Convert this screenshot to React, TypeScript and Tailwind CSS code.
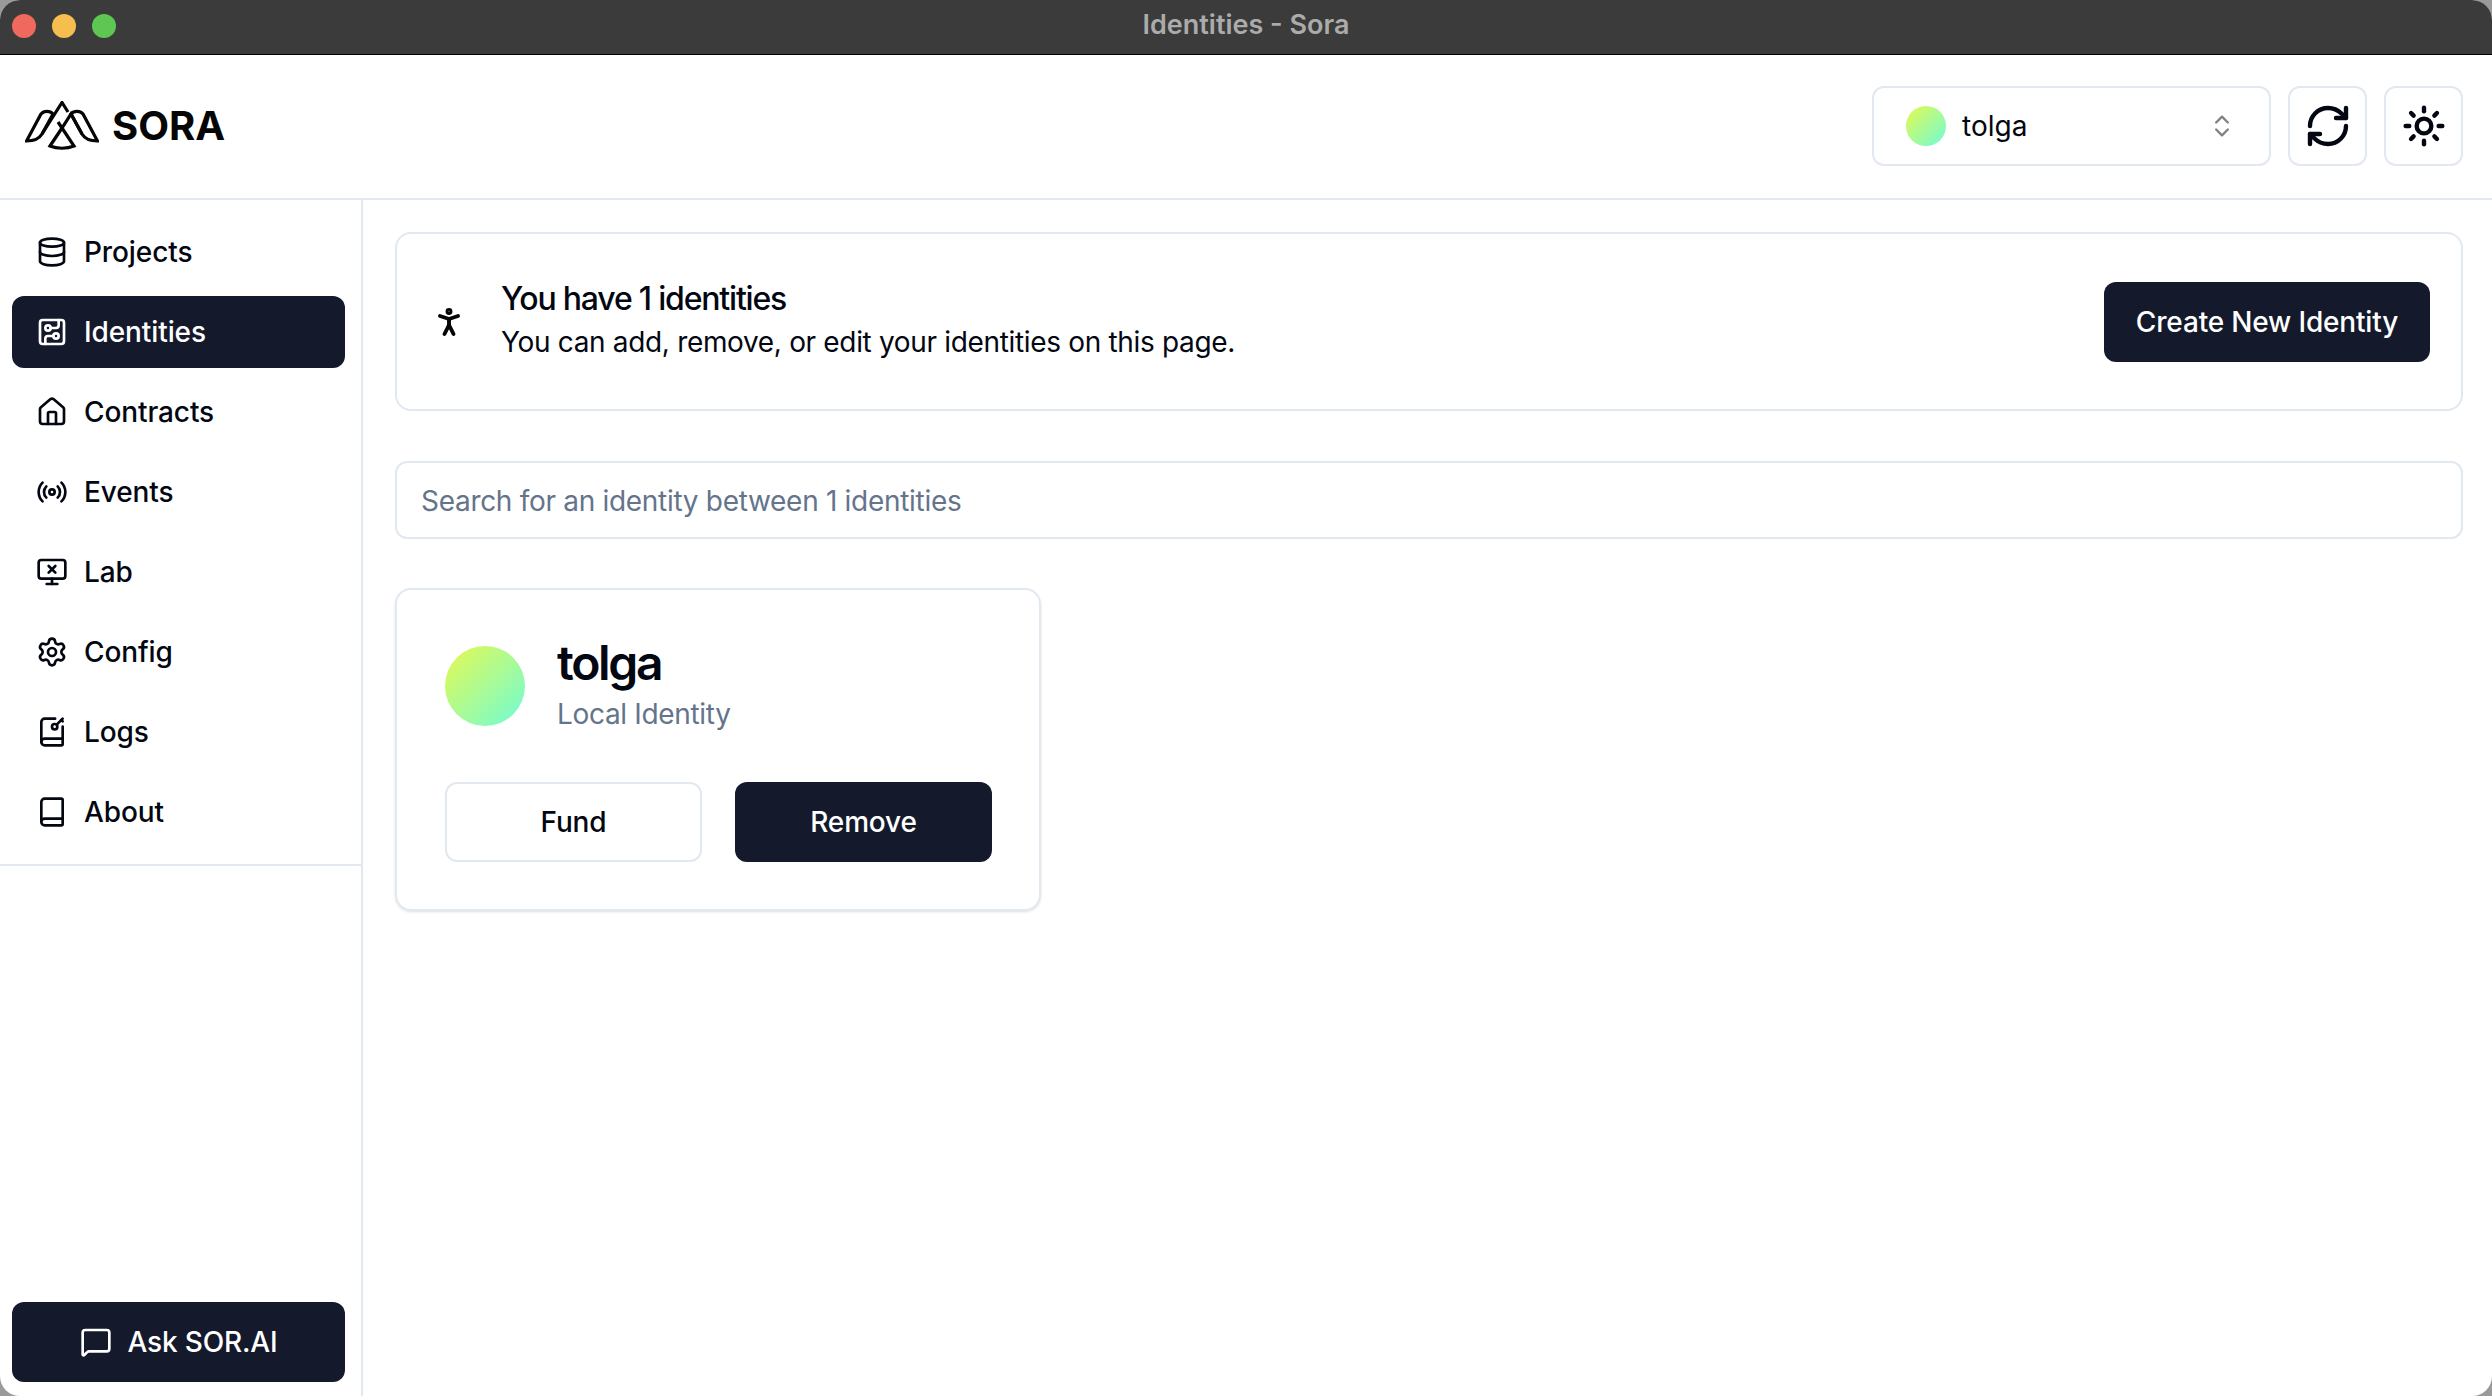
import { Database, CircuitBoard, House, Radio, MonitorX, Settings, BookKey, Book, MessageSquare, RefreshCw, Sun, ChevronsUpDown, PersonStanding } from "lucide-react";

const nav = [
  { label: "Projects", Icon: Database },
  { label: "Identities", Icon: CircuitBoard, active: true },
  { label: "Contracts", Icon: House },
  { label: "Events", Icon: Radio },
  { label: "Lab", Icon: MonitorX },
  { label: "Config", Icon: Settings },
  { label: "Logs", Icon: BookKey },
  { label: "About", Icon: Book },
];

function Logo() {
  return (
    <svg width="74" height="50" viewBox="0 0 74 50" fill="none" stroke="#050505" strokeWidth="3.2" strokeLinejoin="miter">
      <path d="M1.5 40 C8 40 14 38 17 33 L28 13 C25 9.5 19 9.5 16 13 Z" />
      <path d="M72.5 40 C66 40 60 38 57 33 L46 13 C49 9.5 55 9.5 58 13 Z" />
      <path d="M17 33 L37 1.5 L43 11" />
      <path d="M57 33 L46 13 L37 27 L33 21" />
      <path d="M25 45 L37 27 L49 45 C42 48 32 48 25 45 Z" />
    </svg>
  );
}

function Avatar({ cls }: { cls: string }) {
  return <div className={`rounded-full bg-linear-to-br/srgb from-[#e6f94f] to-[#6ffcd8] ${cls}`} />;
}

export default function App() {
  return (
    <div className="h-screen w-full bg-[#9a9a9a]">
      <div className="h-full w-full overflow-hidden rounded-[20px] flex flex-col bg-white text-[#030712] font-['Inter',sans-serif]">
        <div className="relative h-[55px] shrink-0 bg-[#3a3b3a] border-b border-black flex items-center justify-center">
          <div className="absolute left-[12px] top-[14px] flex gap-[16px]">
            <span className="size-[24px] rounded-full bg-[#f0695f]" />
            <span className="size-[24px] rounded-full bg-[#f6bd4f]" />
            <span className="size-[24px] rounded-full bg-[#60c653]" />
          </div>
          <span className="text-[27px] font-semibold text-[#ababab] pb-[4px]">Identities - Sora</span>
        </div>

        <header className="h-[145px] shrink-0 border-b-2 border-[#e2e8f0] flex items-center justify-between pl-[25px] pr-[29px] pb-[1px]">
          <div className="flex items-center gap-[13px]">
            <Logo />
            <span className="text-[40px] font-bold leading-none text-[#050505]">SORA</span>
          </div>
          <div className="flex items-center gap-[17px]">
            <div className="w-[399px] h-[80px] rounded-[12px] border-2 border-[#e2e8f0] flex items-center pl-[32px] pr-[33px]">
              <Avatar cls="size-[40px] mr-[16px]" />
              <span className="text-[28px] flex-1">tolga</span>
              <ChevronsUpDown size={28} strokeWidth={2} className="opacity-50" />
            </div>
            <button className="w-[79px] h-[80px] rounded-[12px] border-2 border-[#e2e8f0] flex items-center justify-center">
              <RefreshCw size={48} strokeWidth={2.2} />
            </button>
            <button className="w-[79px] h-[80px] rounded-[12px] border-2 border-[#e2e8f0] flex items-center justify-center">
              <Sun size={44} strokeWidth={2.4} />
            </button>
          </div>
        </header>

        <div className="flex-1 flex min-h-0">
          <aside className="w-[363px] shrink-0 border-r-2 border-[#e2e8f0] flex flex-col">
            <nav className="px-[12px] pt-[16px] pb-[16px] flex flex-col gap-[8px] border-b-2 border-[#e2e8f0] mr-[-2px]">
              {nav.map(({ label, Icon, active }) => (
                <a
                  key={label}
                  className={`h-[72px] w-[333px] rounded-[12px] flex items-center pl-[24px] gap-[16px] text-[28px] font-medium tracking-[-0.1px] ${active ? "bg-[#141a2c] text-white" : ""}`}
                >
                  <Icon size={32} strokeWidth={2} />
                  {label}
                </a>
              ))}
            </nav>
            <div className="mt-auto px-[12px] pb-[14px]">
              <button className="h-[80px] w-[333px] rounded-[12px] bg-[#141a2c] text-white flex items-center justify-center gap-[16px] text-[28px] font-medium tracking-[-0.17px]">
                <MessageSquare size={32} strokeWidth={2} />
                Ask SOR.AI
              </button>
            </div>
          </aside>

          <main className="flex-1 pl-[32px] pr-[29px] pt-[32px] flex flex-col items-start">
            <section className="w-full h-[179px] rounded-[16px] border-2 border-[#e2e8f0] flex items-center pl-[34px] pr-[31px]">
              <PersonStanding size={36} strokeWidth={2.6} className="mr-[34px] text-[#050505]" />
              <div className="flex-1">
                <div className="text-[32px] leading-[42px] font-medium tracking-[-1.2px] mb-[1px] mt-[-2px]">You have 1 identities</div>
                <div className="text-[28px] leading-[42px] tracking-[-0.33px]">You can add, remove, or edit your identities on this page.</div>
              </div>
              <button className="h-[80px] w-[326px] rounded-[12px] bg-[#141a2c] text-white text-[28px] font-medium tracking-[-0.17px]">Create New Identity</button>
            </section>

            <input
              readOnly
              placeholder="Search for an identity between 1 identities"
              className="w-full mt-[50px] h-[78px] rounded-[12px] border-2 border-[#e2e8f0] px-[24px] pt-[2px] text-[28px] tracking-[-0.3px] placeholder:text-[#64748b] outline-none"
            />

            <section className="w-[646px] mt-[49px] h-[323px] rounded-[16px] border-2 border-[#e2e8f0] shadow-sm pl-[48px] pt-[55px]">
              <div className="flex items-center gap-[32px] h-[82px]">
                <Avatar cls="size-[80px] shrink-0" />
                <div>
                  <div className="text-[48px] leading-[48px] font-semibold tracking-[-2.3px]">tolga</div>
                  <div className="text-[28px] leading-[38px] mt-[8px] tracking-[-0.33px] text-[#64748b]">Local Identity</div>
                </div>
              </div>
              <div className="flex gap-[33px] mt-[55px]">
                <button className="h-[80px] w-[257px] rounded-[12px] border-2 border-[#e2e8f0] text-[28px] font-medium tracking-[-0.17px]">Fund</button>
                <button className="h-[80px] w-[257px] rounded-[12px] bg-[#141a2c] text-white text-[28px] font-medium tracking-[-0.17px]">Remove</button>
              </div>
            </section>
          </main>
        </div>
      </div>
    </div>
  );
}
